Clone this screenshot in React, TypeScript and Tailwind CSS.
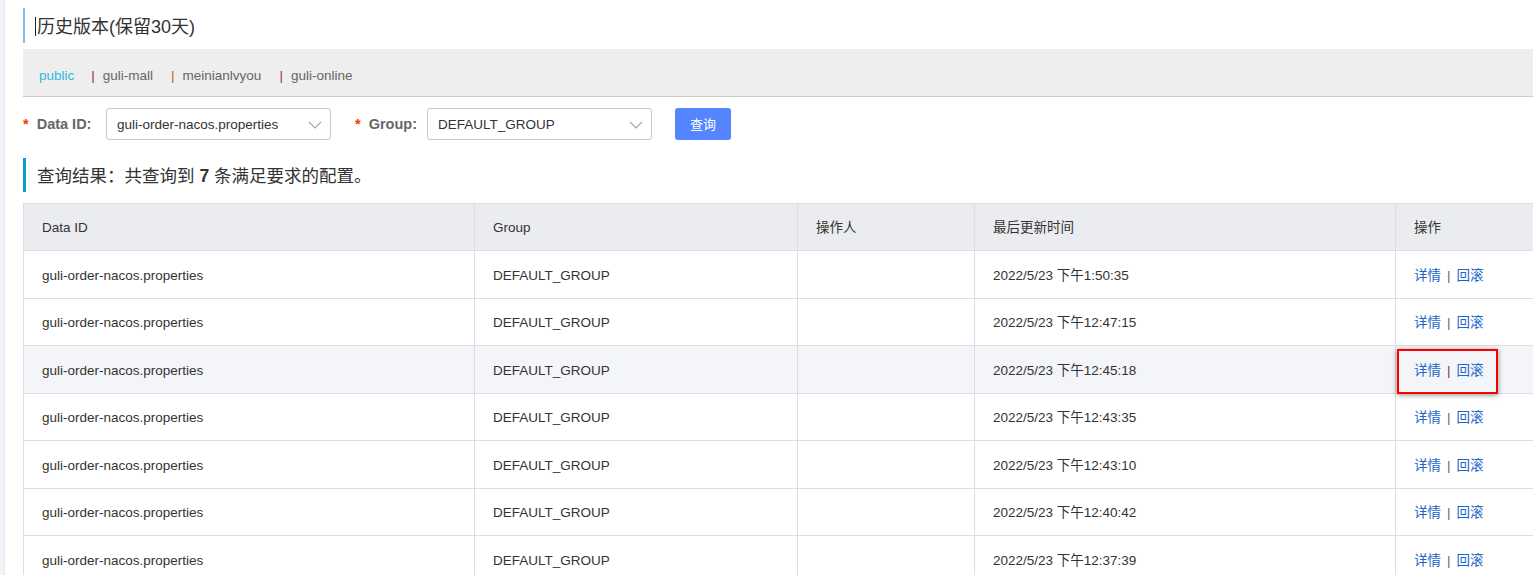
import React from "react";

const rows = [
  "2022/5/23 下午1:50:35",
  "2022/5/23 下午12:47:15",
  "2022/5/23 下午12:45:18",
  "2022/5/23 下午12:43:35",
  "2022/5/23 下午12:43:10",
  "2022/5/23 下午12:40:42",
  "2022/5/23 下午12:37:39",
];

function Chevron() {
  return (
    <svg width="14" height="10" viewBox="0 0 14 10" className="shrink-0">
      <path d="M1 2 L7 8 L13 2" fill="none" stroke="#a0a4ad" strokeWidth="1.1" />
    </svg>
  );
}

function Select({ value }: { value: string }) {
  return (
    <div className="flex h-[32px] w-[225px] items-center justify-between rounded-[3px] border border-[#c4c6cf] bg-white pl-[10px] pr-[8px] pt-[2px] text-[13.5px] text-[#333]">
      <span>{value}</span>
      <Chevron />
    </div>
  );
}

const cell = "flex shrink-0 items-center border-r border-[#dcdee3] pl-[18px] pt-[3px]";

export default function App() {
  return (
    <div
      className="flex min-h-[575px] w-full bg-white text-[#333]"
      style={{ fontFamily: '"Liberation Sans", Arial, "Noto Sans CJK SC", sans-serif' }}
    >
      <div className="w-[5px] shrink-0 border-r border-[#e4e7ee] bg-[#f1f3f8]" />
      <div className="ml-[18px] flex-1 overflow-hidden">
        {/* title */}
        <div className="mt-[8px] flex h-[35px] items-center border-l-[2px] border-[#87b8e6] pl-[10px] pt-[2px]">
          <span className="mr-[1px] h-[19px] w-[1px] bg-[#222]" />
          <span className="text-[18px] leading-none text-[#333]">历史版本(保留30天)</span>
        </div>

        {/* namespace bar */}
        <div className="mt-[6px] flex h-[48px] items-center border-b border-[#cccccc] bg-[#eeeeee] pl-[16px] pt-[7px] text-[13.5px] text-[#666]">
          <span className="text-[#33b8de]">public</span>
          <span className="ml-[17px] text-[#8e2a75]">|</span>
          <span className="ml-[8px]">guli-mall</span>
          <span className="ml-[18px] text-[#b8651b]">|</span>
          <span className="ml-[8px]">meinianlvyou</span>
          <span className="ml-[18px] text-[#8e2a75]">|</span>
          <span className="ml-[8px]">guli-online</span>
        </div>

        {/* form */}
        <div className="mt-[11px] flex h-[32px] items-center">
          <span className="flex w-[83px] items-center pt-[2px] text-[14.5px] font-bold text-[#666]">
            <span className="mr-[8px] text-[#ff3000]">*</span>Data ID:
          </span>
          <Select value="guli-order-nacos.properties" />
          <span className="ml-[24px] flex w-[72px] items-center pt-[2px] text-[14.5px] font-bold text-[#666]">
            <span className="mr-[8px] text-[#ff3000]">*</span>Group:
          </span>
          <Select value="DEFAULT_GROUP" />
          <button className="ml-[23px] h-[32px] w-[56px] rounded-[3px] bg-[#5584ff] pt-[1px] text-[13px] text-white">
            查询
          </button>
        </div>

        {/* result heading */}
        <div className="mt-[18px] flex h-[34px] items-center border-l-[3px] border-[#0f9ad0] pl-[11px] pt-[2px] text-[17.5px] text-[#333]">
          查询结果：共查询到&nbsp;<b>7</b>&nbsp;条满足要求的配置。
        </div>

        {/* table */}
        <div className="mt-[11px] border-l border-t border-[#dcdee3] text-[13.5px] text-[#333]">
          <div className="flex h-[47px] border-b border-[#dcdee3] bg-[#ebecf0]">
            <div className={`${cell} w-[451px]`}>Data ID</div>
            <div className={`${cell} w-[323px]`}>Group</div>
            <div className={`${cell} w-[177px]`}>操作人</div>
            <div className={`${cell} w-[421px]`}>最后更新时间</div>
            <div className="flex flex-1 items-center pl-[18px] pt-[3px]">操作</div>
          </div>
          {rows.map((t, i) => (
            <div
              key={i}
              className={`flex h-[47.5px] border-b border-[#dcdee3] ${i === 2 ? "bg-[#f4f5f8]" : "bg-white"}`}
            >
              <div className={`${cell} w-[451px]`}>guli-order-nacos.properties</div>
              <div className={`${cell} w-[323px]`}>DEFAULT_GROUP</div>
              <div className={`${cell} w-[177px]`}></div>
              <div className={`${cell} w-[421px]`}>{t}</div>
              <div className="relative flex flex-1 items-center pl-[18px] pt-[3px]">
                <span className="text-[#1b66c9]">详情</span>
                <span className={`mx-[6px] ${i === 2 ? "text-[#7a2f66]" : "text-[#666]"}`}>|</span>
                <span className="text-[#1b66c9]">回滚</span>
                {i === 2 && (
                  <div className="absolute left-[1px] top-[3px] h-[45px] w-[101px] border-2 border-[#ff0000] shadow-[0_1px_5px_rgba(0,0,0,0.45)]" />
                )}
              </div>
            </div>
          ))}
        </div>
      </div>
    </div>
  );
}
